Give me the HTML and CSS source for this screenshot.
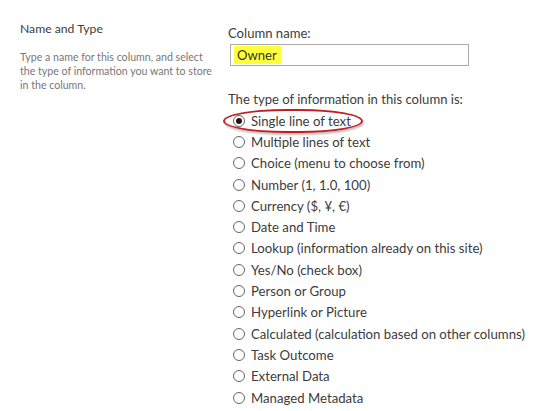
FILE: index.html
```html
<!DOCTYPE html>
<html>
<head>
<meta charset="utf-8">
<link rel="stylesheet" href="styles.css">
</head>
<body>
<div class="page">
  <div class="side">
    <div class="side-title">Name and Type</div>
    <div class="side-desc">Type a name for this column, and select the type of information you want to store in the column.</div>
  </div>
  <div class="main">
    <div class="label">Column name:</div>
    <div class="input"><span class="hl">Owner</span></div>
    <div class="label type-label">The type of information in this column is:</div>
    <ul class="radios">
      <li class="selected"><span class="radio checked"></span>Single line of text<span class="oval"></span></li>
      <li><span class="radio"></span>Multiple lines of text</li>
      <li><span class="radio"></span>Choice (menu to choose from)</li>
      <li><span class="radio"></span>Number (1, 1.0, 100)</li>
      <li><span class="radio"></span>Currency ($, ¥, €)</li>
      <li><span class="radio"></span>Date and Time</li>
      <li><span class="radio"></span>Lookup (information already on this site)</li>
      <li><span class="radio"></span>Yes/No (check box)</li>
      <li><span class="radio"></span>Person or Group</li>
      <li><span class="radio"></span>Hyperlink or Picture</li>
      <li><span class="radio"></span>Calculated (calculation based on other columns)</li>
      <li><span class="radio"></span>Task Outcome</li>
      <li><span class="radio"></span>External Data</li>
      <li><span class="radio"></span>Managed Metadata</li>
    </ul>
  </div>
</div>
</body>
</html>
```
FILE: styles.css
```css
html, body {
  margin: 0;
  padding: 0;
  background: #fff;
}
body {
  font-family: "Lato", "Open Sans", sans-serif;
  color: #3c3c3c;
  overflow: hidden;
}
.page {
  display: flex;
  padding-top: 20px;
}
.side {
  width: 196px;
  flex: none;
  padding-left: 20px;
  padding-right: 12px;
}
.side-title {
  font-size: 12.2px;
  line-height: 18px;
  color: #3c3c3c;
}
.side-desc {
  margin-top: 12px;
  font-size: 10.6px;
  line-height: 14px;
  color: #777;
}
.main {
  flex: 1;
  white-space: nowrap;
}
.label {
  font-size: 13.1px;
  line-height: 18px;
  color: #3c3c3c;
  margin-top: 4px;
}
.input {
  margin-top: 2px;
  margin-left: 2px;
  width: 234px;
  height: 20px;
  border: 1px solid #ababab;
  padding-left: 3px;
  display: flex;
  align-items: center;
}
.hl {
  background: #ffff3b;
  font-size: 13.1px;
  line-height: 18px;
  padding: 0 4px 0 3px;
  color: #333;
}
.type-label {
  margin-top: 24px;
}
.radios {
  list-style: none;
  margin: 2px 0 0;
  padding: 0 0 0 5px;
}
.radios li {
  position: relative;
  display: flex;
  align-items: center;
  height: 21.3px;
  font-size: 13.2px;
  color: #3c3c3c;
}
.radio {
  flex: none;
  width: 10px;
  height: 10px;
  border: 1px solid #666;
  border-radius: 50%;
  margin-right: 6px;
  display: flex;
  align-items: center;
  justify-content: center;
}
.radio.checked::after {
  content: "";
  width: 6px;
  height: 6px;
  border-radius: 50%;
  background: #1a1a1a;
}
.oval {
  position: absolute;
  left: -10px;
  top: -1px;
  width: 140px;
  height: 24px;
  box-sizing: border-box;
  border: 2px solid #c21d25;
  border-radius: 45% / 50%;
  box-shadow: 1px 2px 2px rgba(0, 0, 0, 0.25);
}
```
